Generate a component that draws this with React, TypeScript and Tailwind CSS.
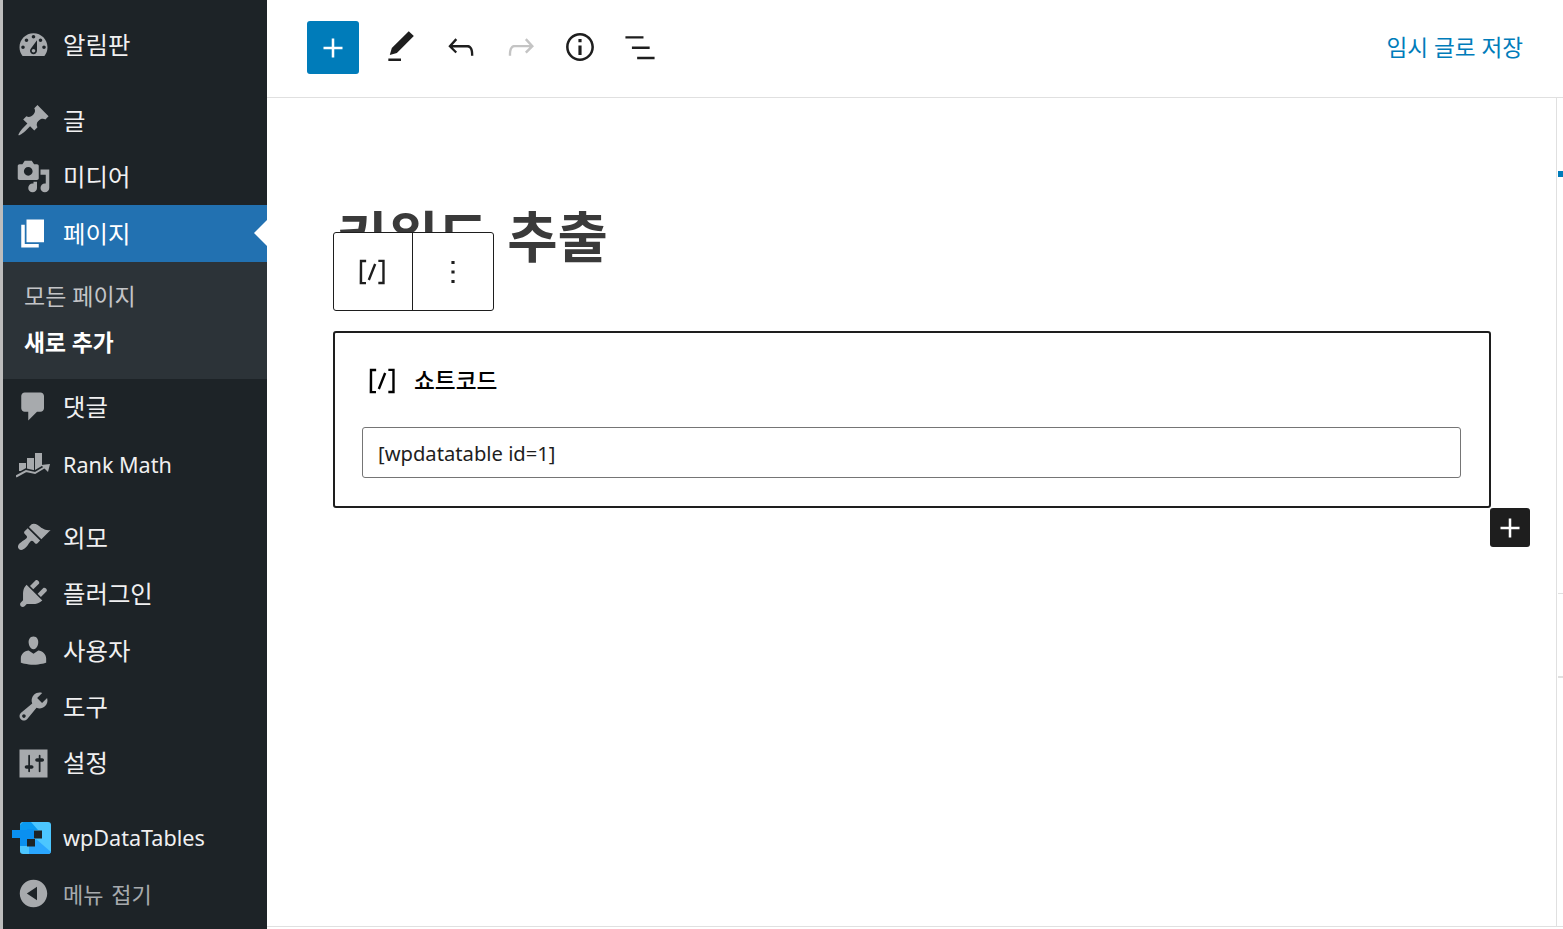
import type { ReactNode } from "react";

const SANS = "font-['Noto_Sans','Noto_Sans_CJK_KR',sans-serif]";

function Dash({ d, className = "" }: { d: string; className?: string }) {
  return (
    <svg viewBox="0 0 20 20" className={`w-[35px] h-[35px] fill-current ${className}`}>
      <path d={d} />
    </svg>
  );
}

function RankMathIcon() {
  return (
    <svg viewBox="0 0 34 25" className="w-[34px] h-[25px] text-[#a7aaad] fill-current -ml-[1px]">
      <path d="M3 10h7v8H3zM11 5h7v14h-7zM19 0h7v18h-7z" />
      <path d="M0 23.500L10 18l9 2 11-6.500" fill="none" stroke="#1d2327" strokeWidth="5" />
      <path d="M0 23.500L10 18l9 2 11-6.500" fill="none" stroke="currentColor" strokeWidth="2" />
      <path d="M25 12l9-1-2 8z" />
    </svg>
  );
}

function WpDataTablesLogo() {
  return (
    <svg viewBox="0 0 39 32" className="w-[39px] h-[32px] -ml-[3px]">
      <rect x="8" y="0" width="31" height="32" rx="3" fill="#4cc6ff" />
      <path d="M24 17l15 13-2 2H17V24z" fill="#2aa6ff" />
      <path d="M11 0h8l7 8H8V3z" fill="#0a9af0" />
      <path d="M0 8h15v-1h7v10h-7v7H8v-8H0z" fill="#0a90f0" />
      <rect x="22" y="8.500" width="8" height="8" fill="#1d2327" />
      <rect x="15" y="17" width="8" height="7.500" fill="#1d2327" />
    </svg>
  );
}

const ICONS = {
  dashboard:
    "M3.76 16h12.48c1.1-1.37 1.76-3.11 1.76-5 0-4.42-3.58-8-8-8s-8 3.58-8 8c0 1.89.66 3.63 1.76 5zM10 4c.55 0 1 .45 1 1s-.45 1-1 1-1-.45-1-1 .45-1 1-1zM6 6c.55 0 1 .45 1 1s-.45 1-1 1-1-.45-1-1 .45-1 1-1zm8 0c.55 0 1 .45 1 1s-.45 1-1 1-1-.45-1-1 .45-1 1-1zm-5.37 5.55L12 7v6c0 1.1-.9 2-2 2s-2-.9-2-2c0-.57.24-1.08.63-1.45zM4 10c.55 0 1 .45 1 1s-.45 1-1 1-1-.45-1-1 .45-1 1-1zm12 0c.55 0 1 .45 1 1s-.45 1-1 1-1-.45-1-1 .45-1 1-1zm-5 3c0-.55-.45-1-1-1s-1 .45-1 1 .45 1 1 1 1-.45 1-1z",
  post: "M10.44 3.02l1.82-1.82 6.36 6.35-1.83 1.82c-1.05-.68-2.48-.57-3.41.36l-.75.75c-.92.93-1.04 2.35-.35 3.41l-1.83 1.82-2.41-2.41-2.8 2.79c-.42.42-3.38 2.71-3.8 2.29s1.86-3.39 2.28-3.81l2.79-2.79L4.1 9.36l1.83-1.82c1.05.69 2.48.57 3.4-.36l.75-.75c.93-.92 1.05-2.35.36-3.41z",
  media:
    "M13 11V4c0-.55-.45-1-1-1h-1.67L9 1H5L3.67 3H2c-.55 0-1 .45-1 1v7c0 .55.45 1 1 1h10c.55 0 1-.45 1-1zM7 4.500c1.380 0 2.500 1.120 2.500 2.500S8.380 9.500 7 9.500 4.500 8.380 4.500 7 5.620 4.500 7 4.500zM14 6h5v10.500c0 1.380-1.120 2.500-2.500 2.500S14 17.880 14 16.500s1.120-2.500 2.500-2.500c.17 0 .34.02.5.05V9h-3V6zm-4 8.050V13h2v3.500c0 1.380-1.120 2.500-2.500 2.500S7 17.880 7 16.500 8.120 14 9.500 14c.17 0 .34.02.5.05z",
  page: "M6 15V2h10v13H6zm-1 1h8v2H3V5h2v11z",
  comments:
    "M5 2h9c1.100 0 2 .9 2 2v7c0 1.100-.9 2-2 2h-2l-5 5v-5H5c-1.100 0-2-.9-2-2V4c0-1.100.9-2 2-2z",
  appearance:
    "M14.480 11.060L7.410 3.990l1.500-1.500c.5-.56 2.300-.47 3.510.32 1.210.8 1.430 1.280 2.910 2.100 1.180.64 2.450 1.260 4.450.85zm-.71.71L6.700 4.700 4.930 6.470c-.39.39-.39 1.020 0 1.410l1.060 1.060c.39.39.39 1.030 0 1.420-.6.6-1.430 1.110-2.210 1.690-.35.26-.7.53-1.010.84C1.430 13.710.5 15.370 1.670 16.540c1.170 1.180 2.830.25 4.170-1.110.31-.3.58-.65.84-1.010.58-.77 1.090-1.610 1.690-2.210.39-.39 1.030-.39 1.420 0l1.060 1.060c.39.39 1.020.39 1.410 0z",
  plugins:
    "M13.110 4.360L9.870 7.600 8 5.730l3.240-3.240c.35-.34 1.050-.2 1.560.32.52.51.66 1.210.31 1.550zm-8 1.770l.91-1.120 9.010 9.010-1.190.84c-.71.71-2.630 1.160-3.820 1.160H6.140L4.900 17.260c-.59.59-1.540.59-2.120 0-.59-.58-.59-1.530 0-2.120l1.240-1.240v-3.880c0-1.130.4-3.190 1.090-3.890zm7.260 3.970l3.240-3.240c.34-.35 1.040-.21 1.550.31.52.51.66 1.210.31 1.550l-3.240 3.250z",
  users:
    "M10 9.250c-2.270 0-2.730-3.440-2.730-3.440C7 4.020 7.820 2 9.970 2c2.160 0 2.980 2.020 2.710 3.810 0 0-.41 3.440-2.680 3.440zm0 2.570L12.720 10c2.390 0 4.520 2.330 4.520 4.530v2.490s-3.650 1.130-7.240 1.130c-3.650 0-7.240-1.130-7.240-1.130v-2.490c0-2.250 1.940-4.480 4.470-4.480z",
  tools:
    "M16.680 9.770c-1.340 1.340-3.300 1.670-4.950.99l-5.410 6.520c-.99.99-2.590.99-3.580 0s-.99-2.590 0-3.570l6.520-5.420c-.68-1.650-.35-3.610.99-4.950 1.280-1.280 3.120-1.620 4.720-1.060l-2.890 2.890 2.820 2.820 2.860-2.870c.53 1.580.18 3.390-1.080 4.650zM3.810 16.210c.4.39 1.040.39 1.430 0 .4-.4.4-1.040 0-1.430-.39-.4-1.030-.4-1.430 0-.39.39-.39 1.030 0 1.430z",
  settings:
    "M18 18V2H2v16zM8 11h1c.55 0 1 .45 1 1s-.45 1-1 1H8v1.500c0 .28-.22.5-.5.5s-.5-.22-.5-.5V13H6c-.55 0-1-.45-1-1s.45-1 1-1h1V5.500c0-.28.22-.5.5-.5s.5.22.5.5V11zm5-2h-1c-.55 0-1-.45-1-1s.45-1 1-1h1V5.500c0-.28.22-.5.5-.5s.5.22.5.5V7h1c.55 0 1 .45 1 1s-.45 1-1 1h-1v5.500c0 .28-.22.5-.5.5s-.5-.22-.5-.5V9z",
  collapse:
    "M10 2.160c4.330 0 7.840 3.510 7.840 7.840s-3.510 7.840-7.840 7.840S2.160 14.330 2.160 10 5.710 2.160 10 2.160zm2 11.720V6.120L6.180 9.970z",
};

function MenuItem({
  icon,
  label,
  active,
  dim,
  latin,
  className = "",
}: {
  icon: ReactNode;
  label: string;
  active?: boolean;
  dim?: boolean;
  latin?: boolean;
  className?: string;
}) {
  const textSize = latin
    ? "text-[21.6px]"
    : dim
      ? "text-[22px] [word-spacing:2px]"
      : "text-[24.4px]";
  return (
    <div
      className={`relative flex items-center h-[56.4px] ${
        active ? "bg-[#2271b1] text-white" : dim ? "text-[#a7aaad]" : "text-[#f0f0f1]"
      } ${className}`}
    >
      <span className="w-[60px] shrink-0 flex items-center justify-center">{icon}</span>
      <span className={`${textSize} ${latin ? "" : "pt-px"}`}>{label}</span>
      {active && (
        <span className="absolute right-0 top-1/2 -translate-y-1/2 border-y-[13px] border-y-transparent border-r-[13px] border-r-white" />
      )}
    </div>
  );
}

function Sidebar() {
  const grayIcon = "text-[#a7aaad]";
  return (
    <aside className="w-[264px] shrink-0 bg-[#1d2327] pt-[17px] h-full overflow-hidden">
      <MenuItem icon={<Dash d={ICONS.dashboard} className={grayIcon} />} label="알림판" />
      <div className="h-[19px]" />
      <MenuItem icon={<Dash d={ICONS.post} className={grayIcon} />} label="글" />
      <MenuItem icon={<Dash d={ICONS.media} className={grayIcon} />} label="미디어" />
      <MenuItem icon={<Dash d={ICONS.page} className="text-white" />} label="페이지" active />
      <div className="h-[117px] bg-[#2c3338] pt-[11px]">
        <div className="h-[48px] flex items-center pl-[21px] text-[23px] text-[#c3c4c7]">모든 페이지</div>
        <div className="h-[46px] flex items-center pl-[21px] text-[22.8px] font-bold text-white">새로 추가</div>
      </div>
      <MenuItem icon={<Dash d={ICONS.comments} className={grayIcon} />} label="댓글" />
      <div className="h-[2px]" />
      <MenuItem icon={<RankMathIcon />} label="Rank Math" latin />
      <div className="h-[16px]" />
      <MenuItem icon={<Dash d={ICONS.appearance} className={grayIcon} />} label="외모" />
      <MenuItem icon={<Dash d={ICONS.plugins} className={grayIcon} />} label="플러그인" />
      <MenuItem icon={<Dash d={ICONS.users} className={grayIcon} />} label="사용자" />
      <MenuItem icon={<Dash d={ICONS.tools} className={grayIcon} />} label="도구" />
      <MenuItem icon={<Dash d={ICONS.settings} className={grayIcon} />} label="설정" />
      <div className="h-[19px]" />
      <MenuItem icon={<WpDataTablesLogo />} label="wpDataTables" latin />
      <MenuItem icon={<Dash d={ICONS.collapse} className={grayIcon} />} label="메뉴 접기" dim className="-mt-px" />
    </aside>
  );
}

function Gb({ d, className = "" }: { d: string; className?: string }) {
  return (
    <svg viewBox="0 0 24 24" className={`w-[38px] h-[38px] fill-current ${className}`}>
      <path d={d} />
    </svg>
  );
}

const PLUS = "M18 11.200h-5.200V6h-1.600v5.200H6v1.600h5.200V18h1.600v-5.200H18z";
const SHORTCODE =
  "M16 4.200v1.500h2.500v12.500H16v1.500h4V4.200h-4zM4.200 19.800h4v-1.500H5.800V5.800h2.500V4.200h-4l-.1 15.600zm5.100-3.100l1.400.6 4-10-1.400-.6-4 10z";

function TopBar() {
  return (
    <header className="h-[98px] shrink-0 border-b border-[#e0e0e0] bg-white flex items-center pl-[40px] pr-[40px]">
      <button className="w-[52px] h-[53px] rounded-[3px] bg-[#007cba] text-white flex items-center justify-center -mt-[2px]">
        <Gb d={PLUS} />
      </button>
      <div className="flex items-center ml-[12px] -mt-[3px] text-[#1e1e1e]">
        <span className="w-[60px] flex justify-center">
          <Gb d="M20.100 5.100L16.900 2 6.200 12.700l-1.300 4.400 4.500-1.300L20.100 5.100zM4 20.800h8v-1.500H4v1.500z" />
        </span>
        <span className="w-[60px] flex justify-center">
          <Gb d="M18.300 11.700c-.6-.6-1.400-.9-2.300-.9H6.700l2.900-3.300-1.100-1-4.500 5L8.500 16l1-1-2.700-2.700H16c.5 0 .9.2 1.300.5 1 1 1 3.400 1 4.500v.3h1.500v-.2c0-1.500 0-4.300-1.500-5.700z" />
        </span>
        <span className="w-[59px] flex justify-center text-[#c4c4c4]">
          <Gb d="M15.600 6.500l-1.100 1 2.900 3.300H8c-.9 0-1.700.3-2.300.9-1.400 1.500-1.400 4.200-1.400 5.600v.2h1.500v-.3c0-1.100 0-3.500 1-4.500.3-.3.7-.5 1.300-.5h9.200L14.500 15l1.100 1.100 4.600-4.600-4.600-5z" />
        </span>
        <span className="w-[60px] flex justify-center">
          <Gb d="M12 3.200c-4.800 0-8.800 3.900-8.800 8.800 0 4.800 3.900 8.800 8.800 8.800 4.800 0 8.800-3.900 8.800-8.800 0-4.800-4-8.800-8.800-8.800zm0 16c-4 0-7.200-3.300-7.200-7.200C4.800 8 8 4.800 12 4.800s7.200 3.300 7.200 7.200c0 4-3.200 7.200-7.200 7.200zM11 17h2v-6h-2v6zm0-8h2V7h-2v2z" />
        </span>
        <span className="w-[60px] flex justify-center">
          <Gb d="M2.800 5.200h11.400v1.500H2.800zM6.900 11.700h11.200v1.500H6.900zM10.200 18.200h11v1.500h-11z" />
        </span>
      </div>
      <span className="ml-auto text-[22.6px] text-[#007cba] -mt-[2px]">임시 글로 저장</span>
    </header>
  );
}

function Editor() {
  return (
    <main className="flex-1 relative border-b border-[#e0e0e0] pl-[66px] pt-[100px] min-h-0">
      <h1 className="h-[133px] text-[54.7px] leading-[76px] font-bold text-[#3a3a3a] [word-spacing:5px]">
        <span className="pl-[4px]">키워드 추출</span>
      </h1>

      <div className="absolute left-[66px] top-[134px] w-[161px] h-[79px] flex bg-white border border-[#1e1e1e] rounded-[3px] text-[#1e1e1e]">
        <div className="w-[79px] flex items-center justify-center border-r border-[#1e1e1e]">
          <Gb d={SHORTCODE} className="-ml-[2px]" />
        </div>
        <div className="flex-1 flex items-center justify-center">
          <Gb d="M13 19h-2v-2h2v2zm0-6h-2v-2h2v2zm0-6h-2V5h2v2z" />
        </div>
      </div>

      <section className="relative h-[177px] border-2 border-[#1e1e1e] rounded-[3px] pl-[27px] pr-[28px] pt-[29px] w-[1158px]">
        <div className="flex items-center h-[38px] text-black">
          <Gb d={SHORTCODE} className="ml-[1px]" />
          <span className="ml-[13px] text-[22.7px] font-medium">쇼트코드</span>
        </div>
        <div className="mt-[27px] h-[51px] border border-[#757575] rounded-[3px] flex items-center pl-[15px] pt-[2px] text-[20.2px] text-[#1e1e1e]">
          [wpdatatable id=1]
        </div>
        <button className="absolute -right-[41px] -bottom-[41px] w-[40px] h-[39px] rounded-[3px] bg-[#1e1e1e] text-white flex items-center justify-center">
          <Gb d={PLUS} />
        </button>
      </section>

      {/* editor scrollbar rail with block markers */}
      <span className="absolute right-[6px] top-0 bottom-0 w-px bg-[#e0e0e0]" />
      <span className="absolute right-0 top-[73px] w-[5px] h-[6px] bg-[#007cba]" />
      <span className="absolute right-0 top-[495px] w-[5px] h-px bg-[#e0e0e0]" />
      <span className="absolute right-0 top-[578px] w-[5px] h-[2px] bg-[#e0e0e0]" />
    </main>
  );
}

export default function App() {
  return (
    <div className={`h-[929px] w-[1563px] flex overflow-hidden bg-white ${SANS}`}>
      <div className="w-[3px] shrink-0 bg-[#bdbdbd]" />
      <Sidebar />
      <div className="flex-1 flex flex-col h-[927px] min-w-0">
        <TopBar />
        <Editor />
      </div>
    </div>
  );
}
